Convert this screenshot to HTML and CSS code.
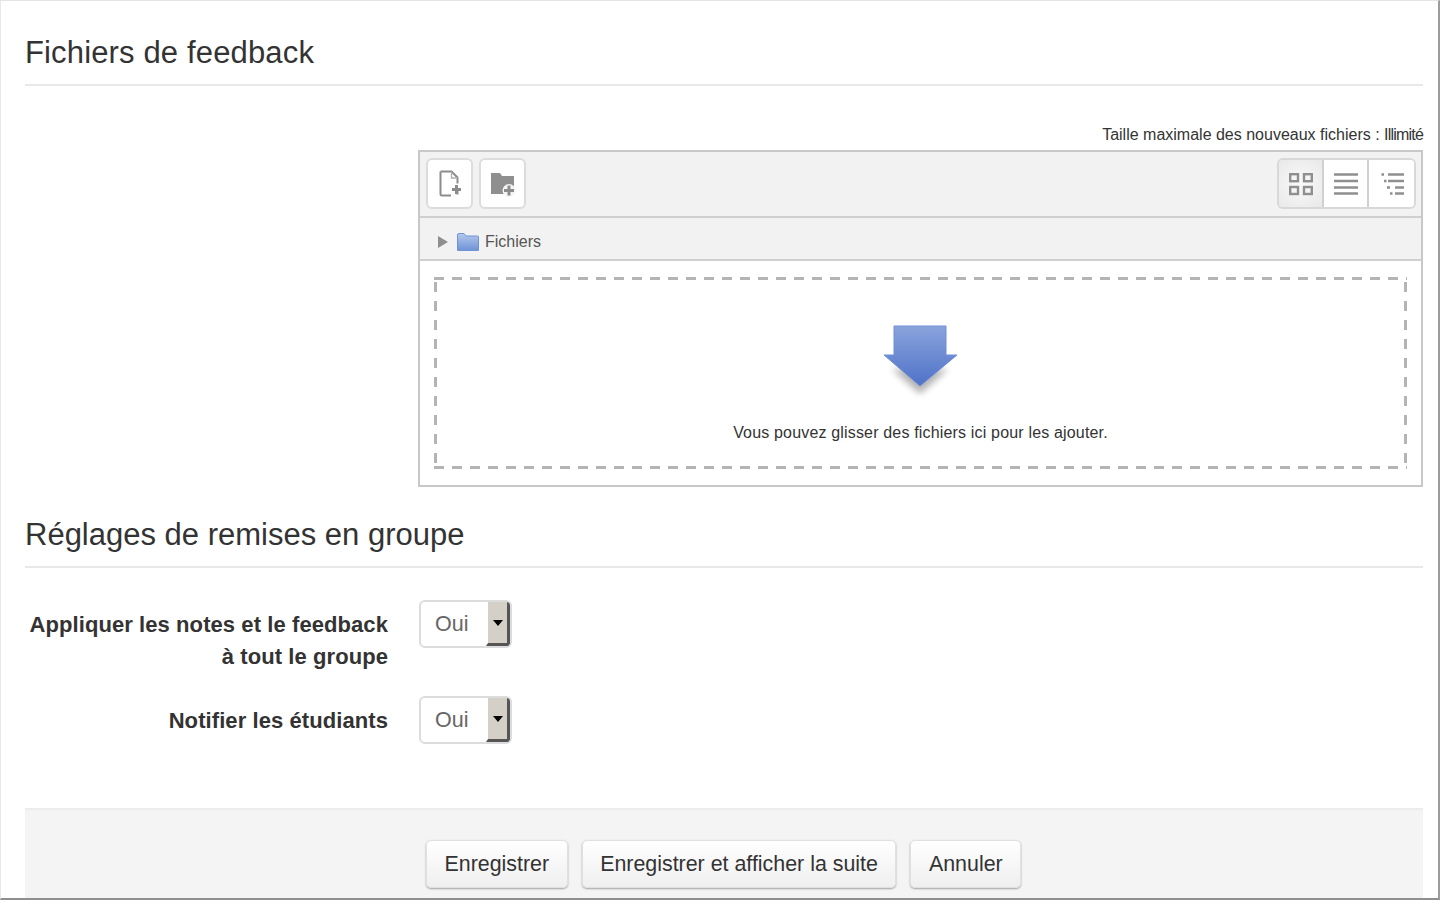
FILE: index.html
```html
<!DOCTYPE html>
<html lang="fr">
<head>
<meta charset="utf-8">
<title>Fichiers de feedback</title>
<link rel="stylesheet" href="styles.css">
</head>
<body>
<main class="page">
  <h2 class="section-title first">Fichiers de feedback</h2>
  <section class="file-row">
    <p class="limit">Taille maximale des nouveaux fichiers : <span class="limit-value">Illimité</span></p>
    <div class="manager">
      <div class="toolbar">
        <div class="tool-group">
          <button class="tool" type="button" aria-label="Ajouter">
            <svg width="26" height="28" viewBox="0 0 26 28"><path d="M3.500 1.500h11l6 6v6M20.500 21v3.500M14 25.500H5a1.500 1.500 0 0 1-1.500-1.500V1.500" fill="none" stroke="#8c8c8c" stroke-width="2"/><path d="M14.500 2v6h6" fill="none" stroke="#b0b0b0" stroke-width="1.400"/><path d="M19.500 15v9M15 19.500h9" stroke="#8c8c8c" stroke-width="3"/></svg>
          </button>
          <button class="tool" type="button" aria-label="Créer un dossier">
            <svg width="26" height="28" viewBox="0 0 26 28"><path d="M1 3h9l2 3h12v18H1z" fill="#8f8f8f"/><circle cx="19" cy="20.500" r="6.500" fill="#f5f5f5"/><path d="M19 15.500v10M14 20.500h10" stroke="#8c8c8c" stroke-width="3"/></svg>
          </button>
        </div>
        <div class="view-group">
          <button class="view active" type="button" aria-label="Icônes">
            <svg width="24" height="24" viewBox="0 0 24 24"><g fill="none" stroke="#8f8f8f" stroke-width="2.400"><rect x="1.200" y="2.200" width="7.800" height="7"/><rect x="15" y="2.200" width="7.800" height="7"/><rect x="1.200" y="15" width="7.800" height="7"/><rect x="15" y="15" width="7.800" height="7"/></g></svg>
          </button>
          <button class="view" type="button" aria-label="Liste">
            <svg width="24" height="24" viewBox="0 0 24 24"><path d="M0 2.500h24M0 9h24M0 15.500h24M0 21.500h24" stroke="#8f8f8f" stroke-width="2.500"/></svg>
          </button>
          <button class="view" type="button" aria-label="Arborescence">
            <svg width="24" height="24" viewBox="0 0 24 24"><path d="M1.500 2.500H4M8 2.500h16M4 9h2.500M8 9h16M7 15.500h3M15 15.500h9M10 21.500h2.500M15 21.500h9" stroke="#8f8f8f" stroke-width="2.500"/></svg>
          </button>
        </div>
      </div>
      <div class="path-bar">
        <span class="caret"></span>
        <svg class="folder" width="22" height="18" viewBox="0 0 22 18"><defs><linearGradient id="folderFill" x1="0" y1="0" x2="0" y2="1"><stop offset="0" stop-color="#b5c9ec"/><stop offset="1" stop-color="#6e93d6"/></linearGradient></defs><path d="M.5 17.500V2a1.500 1.500 0 0 1 1.500-1.500h5L9 3h11.500a1 1 0 0 1 1 1v13.500z" fill="url(#folderFill)" stroke="#6f94d4"/></svg>
        <span class="path-label">Fichiers</span>
      </div>
      <div class="drop-area">
        <div class="drop-box">
          <svg class="arrow" width="90" height="76" viewBox="0 0 90 76">
            <defs>
              <linearGradient id="arrowFill" x1="0" y1="0" x2="0" y2="1"><stop offset="0" stop-color="#8aa3dc"/><stop offset="1" stop-color="#4f72c8"/></linearGradient>
              <filter id="arrowShadow" x="-30%" y="-30%" width="160%" height="160%"><feGaussianBlur stdDeviation="3.500"/></filter>
            </defs>
            <path d="M44 71 16 46h56z" fill="#000" opacity=".3" filter="url(#arrowShadow)"/>
            <path d="M18 3h52v29h11L44 63 8 32h10z" fill="url(#arrowFill)" stroke="#6f8fd6" stroke-width="1"/>
          </svg>
          <p class="drop-text">Vous pouvez glisser des fichiers ici pour les ajouter.</p>
        </div>
      </div>
    </div>
  </section>

  <h2 class="section-title second">Réglages de remises en groupe</h2>
  <div class="fields">
    <div class="field">
      <label class="field-label">Appliquer les notes et le feedback à tout le groupe</label>
      <div class="select"><span class="select-value">Oui</span><span class="select-btn"></span></div>
    </div>
    <div class="field">
      <label class="field-label">Notifier les étudiants</label>
      <div class="select"><span class="select-value">Oui</span><span class="select-btn"></span></div>
    </div>
  </div>
  <div class="actions">
    <button class="btn" type="button">Enregistrer</button>
    <button class="btn" type="button">Enregistrer et afficher la suite</button>
    <button class="btn" type="button">Annuler</button>
  </div>
</main>
</body>
</html>
```
FILE: styles.css
```css
* { box-sizing: border-box; }
html, body { margin: 0; height: 900px; overflow: hidden; background: #fff; }
body {
  border-top: 1px solid #e4e4e4;
  border-left: 1px solid #e8e8e8;
  border-right: 2px solid #9c9c9c;
  border-bottom: 2px solid #8f8f8f;
  font-family: "Liberation Sans", Arial, sans-serif;
  color: #333;
}
.page { padding: 0 15px 0 24px; height: 100%; display: flex; flex-direction: column; }
.section-title {
  margin: 0;
  font-weight: 400;
  font-size: 31px;
  line-height: 36px;
  color: #333;
  border-bottom: 2px solid #e8e8e8;
}
.section-title.first { padding-top: 34px; padding-bottom: 13px; letter-spacing: .15px; }
.section-title.second { padding-top: 30px; padding-bottom: 13px; }
.file-row { margin-left: 393px; padding-top: 39px; }
.limit { margin: 0; font-size: 16px; line-height: 20px; text-align: right; color: #333; height: 25px; }
.limit-value { letter-spacing: -.8px; }
.manager { border: 2px solid #c8c8c8; height: 337px; display: flex; flex-direction: column; }
.toolbar { height: 66px; background: #f2f2f2; border-bottom: 2px solid #cfcfcf; padding: 6px 5px 6px 6px; display: flex; justify-content: space-between; }
.tool-group { display: flex; gap: 6px; }
.tool { width: 47px; height: 51px; padding: 0; background: #fff; border: 2px solid #dcdcdc; border-radius: 6px; display: flex; align-items: center; justify-content: center; }
.view-group { display: flex; height: 51px; border: 2px solid #d8d8d8; border-radius: 6px; background: #fff; overflow: hidden; }
.view { width: 45px; padding: 0; border: 0; border-right: 2px solid #d0d0d0; background: #fff; display: flex; align-items: center; justify-content: center; }
.view:last-child { border-right: 0; }
.view.active { background: radial-gradient(circle at center, #fafafa, #e8e8e8); }
.path-bar { height: 43px; background: #f2f2f2; border-bottom: 2px solid #cfcfcf; display: flex; align-items: center; padding: 7px 0 0 18px; font-size: 16px; color: #555; }
.caret { width: 0; height: 0; border-left: 10px solid #8f8f8f; border-top: 6px solid transparent; border-bottom: 6px solid transparent; margin-right: 9px; }
.folder { margin-right: 6px; }
.drop-area { flex: 1; padding: 16px 14px; }
.drop-box {
  height: 100%;
  display: flex;
  flex-direction: column;
  align-items: center;
  padding-top: 46px;
  background:
    linear-gradient(90deg, #b4b4b4 10px, transparent 10px) 0 0 / 18px 3px repeat-x,
    linear-gradient(90deg, #b4b4b4 10px, transparent 10px) 0 100% / 18px 3px repeat-x,
    linear-gradient(#b4b4b4 10px, transparent 10px) 0 5px / 3px 19px repeat-y,
    linear-gradient(#b4b4b4 10px, transparent 10px) 100% 5px / 3px 19px repeat-y;
}
.arrow { display: block; }
.drop-text { margin: 0; padding-top: 24px; font-size: 16px; line-height: 20px; letter-spacing: .17px; color: #333; }
.fields { padding-top: 32px; display: flex; flex-direction: column; gap: 23px; }
.field { display: grid; grid-template-columns: 363px auto; column-gap: 31px; align-items: start; }
.field-label { font-size: 22px; font-weight: 700; letter-spacing: .08px; line-height: 32px; text-align: right; color: #333; padding-top: 9px; }
.select { width: 93px; height: 48px; display: flex; border: 2px solid #dcdcdc; border-radius: 6px; background: #fff; overflow: hidden; }
.select-value { flex: 1; font-size: 21.5px; line-height: 44px; padding-left: 14px; color: #666; }
.select-btn { width: 24px; background: #d4d0c8; border-left: 2px solid #fff; border-right: 3px solid #555; border-bottom: 3px solid #555; display: flex; align-items: center; justify-content: center; }
.select-btn::after { content: ""; border-top: 6px solid #000; border-left: 5px solid transparent; border-right: 5px solid transparent; }
.actions { margin-top: auto; height: 90px; background: #f4f4f4; border-top: 2px solid #ececec; padding-top: 30px; padding-left: 401px; display: flex; gap: 14px; align-items: flex-start; }
.btn { height: 48px; padding: 2px 17.5px 0; font: 400 21.4px/1 "Liberation Sans", Arial, sans-serif; color: #333; background: linear-gradient(#fff, #efefef); border: 1px solid #e0e0e0; border-radius: 5px; box-shadow: 0 1px 2px rgba(0, 0, 0, .35); }
```
